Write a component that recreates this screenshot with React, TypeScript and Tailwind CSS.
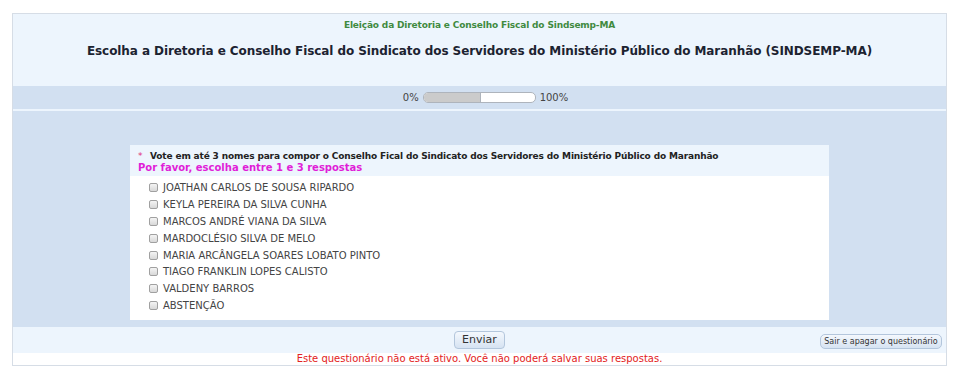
import React from 'react';

const options = [
  'JOATHAN CARLOS DE SOUSA RIPARDO',
  'KEYLA PEREIRA DA SILVA CUNHA',
  'MARCOS ANDRÉ VIANA DA SILVA',
  'MARDOCLÉSIO SILVA DE MELO',
  'MARIA ARCÂNGELA SOARES LOBATO PINTO',
  'TIAGO FRANKLIN LOPES CALISTO',
  'VALDENY BARROS',
  'ABSTENÇÃO',
];

export default function App() {
  return (
    <div className="w-[960px] h-[383px] bg-white pt-[13px] pl-[12px] font-['DejaVu_Sans',Verdana,sans-serif]">
      <div className="w-[935px] border border-[#d6dde6] bg-white">
        {/* cabeçalho */}
        <div className="h-[72px] bg-[#edf5fd] flex flex-col items-center pt-[5px]">
          <div className="text-[9px] font-bold text-[#3f8a3f] leading-[12px] tracking-[-0.15px]">
            Eleição da Diretoria e Conselho Fiscal do Sindsemp-MA
          </div>
          <h1 className="mt-[12px] text-[12px] font-bold text-[#1c2331] leading-[16px] tracking-[-0.08px]">
            Escolha a Diretoria e Conselho Fiscal do Sindicato dos Servidores do Ministério Público do Maranhão (SINDSEMP-MA)
          </h1>
        </div>

        {/* progresso */}
        <div className="h-[25px] bg-[#d2e0f1] flex items-center justify-center gap-[4px] text-[10px] text-[#444] border-b-2 border-[#edf5fd] pl-[12px]">
          <span>0%</span>
          <div className="w-[113px] h-[11px] rounded-[5px] border border-[#aeb4bc] bg-white overflow-hidden">
            <div className="w-[57px] h-full bg-[#cbcbcb] border-r border-[#aeb4bc]" />
          </div>
          <span>100%</span>
        </div>

        {/* corpo */}
        <div className="bg-[#d2e0f1] pt-[34px] pb-[7px] pl-[117px]">
          <div className="w-[699px] bg-white">
            <div className="h-[31px] bg-[#edf5fd] pl-[8px] pt-[5px]">
              <div className="flex items-baseline text-[9px] font-bold text-[#222] leading-[12px] tracking-[-0.15px]">
                <span className="text-[#e0307a] w-[12px] font-normal">*</span>
                <span>Vote em até 3 nomes para compor o Conselho Fical do Sindicato dos Servidores do Ministério Público do Maranhão</span>
              </div>
              <div className="text-[10px] font-bold text-[#e01ed8] leading-[12px]">
                Por favor, escolha entre 1 e 3 respostas
              </div>
            </div>
            <div className="pt-[3px] pb-[6px] pl-[19px]">
              {options.map((o) => (
                <label key={o} className="flex items-center h-[16.9px] text-[10px] text-[#444]">
                  <span className="w-[9px] h-[9px] rounded-[2px] border border-[#a0a0a0] bg-gradient-to-b from-[#f4f4f4] to-[#d8d8d8] mr-[5px]" />
                  {o}
                </label>
              ))}
            </div>
          </div>
        </div>

        {/* rodapé */}
        <div className="h-[26px] bg-[#edf5fd] relative flex items-center justify-center">
          <button className="w-[51px] h-[18px] rounded-[4px] border border-[#b3c6dc] bg-gradient-to-b from-[#f4f8fd] to-[#d6e3f2] text-[11px] text-[#333]">
            Enviar
          </button>
          <button className="absolute right-[4px] top-[7px] w-[122px] h-[15px] rounded-[5px] border border-[#b3c6dc] bg-gradient-to-b from-[#f4f8fd] to-[#d6e3f2] text-[8px] text-[#333]">
            Sair e apagar o questionário
          </button>
        </div>
        <div className="h-[12px] text-center text-[10px] text-[#e32222] leading-[12px]">
          Este questionário não está ativo. Você não poderá salvar suas respostas.
        </div>
      </div>
    </div>
  );
}
